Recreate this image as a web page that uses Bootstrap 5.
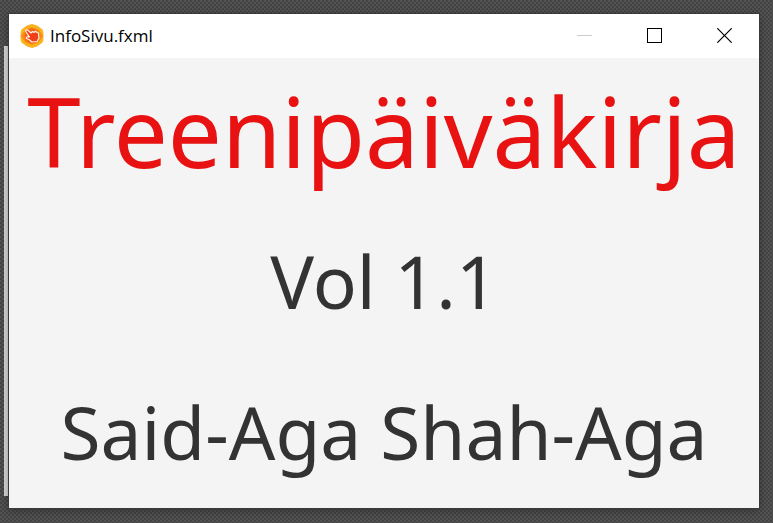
<!DOCTYPE html>
<html lang="fi">
<head>
<meta charset="utf-8">
<meta name="viewport" content="width=device-width, initial-scale=1">
<title>InfoSivu.fxml</title>
<link href="https://cdn.jsdelivr.net/npm/bootstrap@5.3.0/dist/css/bootstrap.min.css" rel="stylesheet">
<style>
  body {
    font-family: "Noto Sans", "Open Sans", sans-serif;
    padding: 14px 14px 15px 9px;
    background: repeating-conic-gradient(#434343 0 25%, #535353 0 50%) 0 0 / 4px 4px;
  }
  .back-window {
    left: 4px; top: 46px; bottom: 27px; width: 60px;
    background: #d4d4d4;
  }
  .app-window { box-shadow: 0 0 0 1px #3a3a3a, 0 2px 8px rgba(0, 0, 0, .4); background: #f4f4f4; }
  .title-bar { height: 44px; padding-left: 11px; gap: 6px; }
  .window-title { font-family: "Open Sans", sans-serif; font-size: 17px; line-height: 24px; }
  .caption-btn { width: 70px; height: 43px; }
  .caption-btn:disabled { opacity: 1; color: #ccc; }
  .info-text { padding-top: 17px; padding-bottom: 32px; color: #333; }
  .app-name { font-size: 96px; line-height: 112px; color: #e81212; }
  .sub-line { font-size: 73px; line-height: 88px; }
  .version { margin-top: 50px; }
  .author { margin-top: 63px; }
</style>
<script src="https://cdn.jsdelivr.net/npm/bootstrap@5.3.0/dist/js/bootstrap.bundle.min.js" defer></script>
</head>
<body class="min-vh-100 d-flex flex-column position-relative">
  <div class="back-window position-absolute"></div>
  <div class="app-window flex-grow-1 d-flex flex-column position-relative">
    <header class="title-bar d-flex align-items-center bg-white text-black">
      <svg width="24" height="24" viewBox="0 0 24 24" aria-hidden="true">
        <path d="M12 0 17 1.500 22 5Q24 8 23.500 12 24 16 22 19L17 22.500 12 24 7 22.500 2 19Q0 16 .5 12 0 8 2 5L7 1.500Z" fill="#f9b023"/>
        <path d="M12 1 17 5 23 6 21 12 23 18 17 19 12 23 7 19 1 18 3 12 1 6 7 5Z" fill="#fbb90e"/>
        <path d="M1 12 5 6 12 3 19 6 23 12 19 18 12 21 5 18Z" fill="#f98c18"/>
        <circle cx="12" cy="12" r="7.500" fill="#f4671b"/>
        <path d="M5.500 7Q5.500 5.500 7.500 6L11 9 12.500 7.500 14 8.500 15.500 7.300 17 8.500Q19 8.500 18.500 11L19 14 17 17.500 12 18 9 15.500 6.500 14.500Q6 13 8 12.800L9.500 13Z" fill="#ee3f18" stroke="#fff3e8" stroke-width="1.100" stroke-linejoin="round"/>
      </svg>
      <span class="window-title me-auto">InfoSivu.fxml</span>
      <div class="d-flex align-self-start">
        <button type="button" class="caption-btn border-0 bg-transparent p-0 d-flex align-items-center justify-content-center" aria-label="Minimize" disabled>
          <svg width="15" height="15" viewBox="0 0 15 15" fill="none" stroke="currentColor" shape-rendering="crispEdges"><path d="M0 7.500H15"/></svg>
        </button>
        <button type="button" class="caption-btn border-0 bg-transparent p-0 d-flex align-items-center justify-content-center" aria-label="Maximize">
          <svg width="15" height="15" viewBox="0 0 15 15" fill="none" stroke="#000" shape-rendering="crispEdges"><path d="M.5.5H14.500V14.500H.5Z"/></svg>
        </button>
        <button type="button" class="caption-btn border-0 bg-transparent p-0 d-flex align-items-center justify-content-center" aria-label="Close">
          <svg width="15" height="15" viewBox="0 0 15 15" fill="none" stroke="#000" stroke-width="1.200"><path d="M.3.3 14.700 14.700M14.700.3.3 14.700"/></svg>
        </button>
      </div>
    </header>
    <main class="info-text text-center text-nowrap">
      <h1 class="app-name fw-normal m-0">Treenipäiväkirja</h1>
      <p class="sub-line version mb-0">Vol 1.1</p>
      <p class="sub-line author mb-0">Said-Aga Shah-Aga</p>
    </main>
  </div>
</body>
</html>
